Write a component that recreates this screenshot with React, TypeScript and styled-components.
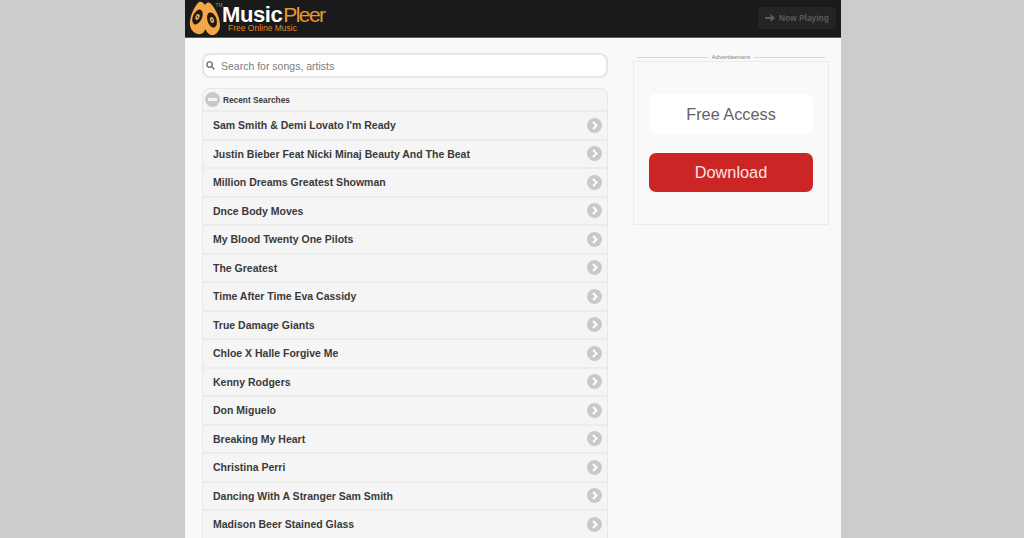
import React from "react";
import styled, { createGlobalStyle } from "styled-components";

const searches = [
  "Sam Smith & Demi Lovato I'm Ready",
  "Justin Bieber Feat Nicki Minaj Beauty And The Beat",
  "Million Dreams Greatest Showman",
  "Dnce Body Moves",
  "My Blood Twenty One Pilots",
  "The Greatest",
  "Time After Time Eva Cassidy",
  "True Damage Giants",
  "Chloe X Halle Forgive Me",
  "Kenny Rodgers",
  "Don Miguelo",
  "Breaking My Heart",
  "Christina Perri",
  "Dancing With A Stranger Sam Smith",
  "Madison Beer Stained Glass",
];

const Global = createGlobalStyle`
  html, body {
    margin: 0;
    height: 538px;
    overflow: hidden;
    background: #cccccc;
    font-family: "Liberation Sans", Arial, sans-serif;
  }
`;

const Page = styled.div`
  width: 656px;
  height: 538px;
  margin: 0 0 0 185px;
  background: #f9f9f9;
  overflow: hidden;
`;

const Header = styled.header`
  height: 38px;
  box-sizing: border-box;
  background: #1a1a1a;
  border-bottom: 1px solid #5e5e5e;
  display: flex;
  align-items: flex-start;
  justify-content: space-between;
  padding: 0 5px 0 3px;
`;

const Logo = styled.div`
  position: relative;
  display: flex;
  align-items: flex-start;
  height: 37px;
`;

const TradeMark = styled.span`
  position: absolute;
  left: 27.5px;
  top: 2px;
  font-size: 5px;
  line-height: 6px;
  color: #8a8a8a;
`;

const LogoText = styled.div`
  margin-left: 1px;
  padding-top: 5px;
  display: flex;
  flex-direction: column;
`;

const LogoTitle = styled.div`
  font-size: 22px;
  line-height: 20px;
  letter-spacing: -0.4px;
  color: #ffffff;
  font-weight: 700;
  white-space: nowrap;
`;

const LogoPleer = styled.span`
  color: #e8982e;
  font-size: 21px;
  font-weight: 400;
  letter-spacing: -1.6px;
  margin-left: 1px;
`;

const LogoTag = styled.div`
  font-size: 8.5px;
  line-height: 8px;
  margin: -1px 0 0 6px;
  color: #d98c28;
  white-space: nowrap;
`;

const NowPlaying = styled.div`
  margin-top: 7px;
  width: 78px;
  height: 22px;
  box-sizing: border-box;
  padding-left: 7px;
  display: flex;
  align-items: center;
  gap: 4px;
  background: #242424;
  border-radius: 2px;
  color: #5c5c5c;
  font-size: 8.4px;
  font-weight: 700;
  white-space: nowrap;
`;

const Body = styled.div`
  display: flex;
  align-items: flex-start;
  padding: 15px 12px 0 17px;
  justify-content: space-between;
`;

const Main = styled.main`
  width: 406px;
`;

const SearchBox = styled.div`
  height: 25px;
  box-sizing: border-box;
  display: flex;
  align-items: center;
  gap: 6px;
  padding-left: 2px;
  background: #ffffff;
  border: 2px solid #e6e6e6;
  border-radius: 8px;
  color: #7d7d7d;
  font-size: 10.5px;
`;

const ListPanel = styled.section`
  margin-top: 10px;
  background: #f5f5f5;
  border: 1px solid #e8e8e8;
  border-bottom: 0;
  border-radius: 8px 8px 0 0;
`;

const ListHeader = styled.div`
  height: 21px;
  display: flex;
  align-items: center;
  gap: 3px;
  padding-left: 2px;
  color: #3a3a3a;
  font-size: 8.3px;
  font-weight: 700;
`;

const Row = styled.div`
  height: 26.5px;
  display: flex;
  align-items: center;
  justify-content: space-between;
  padding: 0 5px 0 10px;
  border-top: 2px solid #ececec;
  color: #3a3a3a;
  font-size: 10.5px;
  font-weight: 700;
  white-space: nowrap;
`;

const Side = styled.aside`
  width: 196px;
`;

const AdLabel = styled.div`
  display: flex;
  align-items: center;
  gap: 4px;
  height: 8px;
  padding: 0 4px;
  font-size: 6px;
  color: #808080;

  &::before,
  &::after {
    content: "";
    flex: 1;
    border-top: 1px solid #d8d8d8;
  }
`;

const AdBox = styled.div`
  height: 164px;
  box-sizing: border-box;
  border: 1px solid #ececec;
  padding: 32px 15px 0;
  display: flex;
  flex-direction: column;
  gap: 19px;
`;

const FreeAccess = styled.div`
  height: 40px;
  background: #ffffff;
  border-radius: 7px;
  display: flex;
  align-items: center;
  justify-content: center;
  color: #636363;
  font-size: 16.3px;
`;

const Download = styled.div`
  height: 39px;
  background: #cc2525;
  border-radius: 7px;
  display: flex;
  align-items: center;
  justify-content: center;
  color: #fbe3e3;
  font-size: 16.3px;
`;

const LogoMark = () => (
  <svg width="33" height="36" viewBox="0 0 33 36">
    <path
      d="M17 5 C15 2 13 1 11 2 C7 5 1 17 2 25 C3 33 11 36 15 33 C16 32 17 30 17.5 29 C18 31 20 34 23 35 C28 36 32 31 32 25 C32 17 26 6 22 3 C20 2 18 3 17 5 Z"
      fill="#f2a748"
    />
    <ellipse cx="9.5" cy="17" rx="4.6" ry="7.8" transform="rotate(24 9.5 17)" fill="#1e1a14" />
    <ellipse cx="24" cy="20" rx="4.6" ry="7.8" transform="rotate(-18 24 20)" fill="#1e1a14" />
    <ellipse cx="9.5" cy="17" rx="2" ry="3" transform="rotate(24 9.5 17)" fill="#f2a748" />
    <ellipse cx="24" cy="20" rx="2" ry="3" transform="rotate(-18 24 20)" fill="#f2a748" />
    <circle cx="9.5" cy="17" r="0.8" fill="#1e1a14" />
    <circle cx="24" cy="20" r="0.8" fill="#1e1a14" />
  </svg>
);

const ArrowIcon = () => (
  <svg width="10" height="8" viewBox="0 0 10 8">
    <path d="M0 3h5.5V0L10 4 5.5 8V5H0z" fill="#5c5c5c" />
  </svg>
);

const SearchIcon = () => (
  <svg width="9" height="9" viewBox="0 0 10 10" fill="none" stroke="#777777" strokeWidth="1.6">
    <circle cx="4" cy="4" r="3" />
    <path d="M6.2 6.2 9.3 9.3" />
  </svg>
);

const MinusIcon = () => (
  <svg width="15" height="15" viewBox="0 0 15 15">
    <circle cx="7.5" cy="7.5" r="7.5" fill="#c9c9c9" />
    <rect x="3" y="6" width="9" height="3" fill="#f4f4f4" />
  </svg>
);

const ChevronIcon = () => (
  <svg width="15" height="15" viewBox="0 0 15 15">
    <circle cx="7.5" cy="7.5" r="7.5" fill="#c9c9c9" />
    <path d="M6 4l3.5 3.5L6 11" fill="none" stroke="#ffffff" strokeWidth="2" />
  </svg>
);

export default function App() {
  return (
    <>
      <Global />
      <Page>
        <Header>
          <Logo>
            <LogoMark />
            <TradeMark>TM</TradeMark>
            <LogoText>
              <LogoTitle>
                Music<LogoPleer>Pleer</LogoPleer>
              </LogoTitle>
              <LogoTag>Free Online Music</LogoTag>
            </LogoText>
          </Logo>
          <NowPlaying>
            <ArrowIcon />
            Now Playing
          </NowPlaying>
        </Header>
        <Body>
          <Main>
            <SearchBox>
              <SearchIcon />
              Search for songs, artists
            </SearchBox>
            <ListPanel>
              <ListHeader>
                <MinusIcon />
                Recent Searches
              </ListHeader>
              {searches.map((s) => (
                <Row key={s}>
                  {s}
                  <ChevronIcon />
                </Row>
              ))}
            </ListPanel>
          </Main>
          <Side>
            <AdLabel>Advertisement</AdLabel>
            <AdBox>
              <FreeAccess>Free Access</FreeAccess>
              <Download>Download</Download>
            </AdBox>
          </Side>
        </Body>
      </Page>
    </>
  );
}
